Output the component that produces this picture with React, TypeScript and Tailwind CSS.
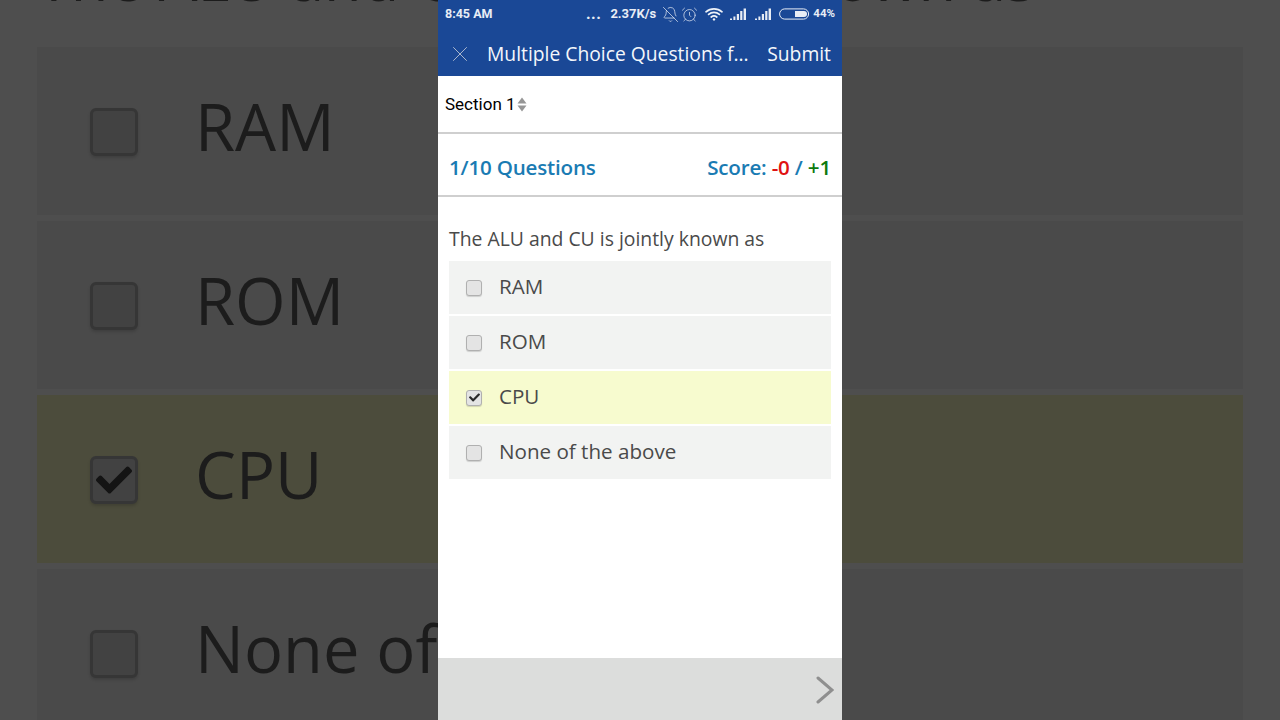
import { AlarmClock, BellOff, X } from 'lucide-react'
import { FaCheck } from 'react-icons/fa'

const options = [
  { label: 'RAM', checked: false },
  { label: 'ROM', checked: false },
  { label: 'CPU', checked: true },
  { label: 'None of the above', checked: false },
]

function Signal() {
  return (
    <svg width="18" height="13" viewBox="0 0 18 13" fill="#e8edf5">
      <rect x="0" y="10.5" width="2" height="1.5" />
      <rect x="3.4" y="8.5" width="2" height="3.5" />
      <rect x="6.8" y="6" width="2.2" height="6" />
      <rect x="10.2" y="3" width="2.2" height="9" />
      <rect x="13.6" y="0.5" width="2.4" height="11.5" />
    </svg>
  )
}

function Wifi() {
  return (
    <svg width="18" height="14" viewBox="0 0 18 14" fill="none" stroke="#eef2f8" strokeWidth="1.7" strokeLinecap="round">
      <path d="M1 4.8C5.6 .8 12.4 .8 17 4.8" />
      <path d="M3.6 7.4C6.7 4.8 11.3 4.8 14.4 7.4" />
      <path d="M6.2 10C7.8 8.7 10.2 8.7 11.8 10" />
      <circle cx="9" cy="12.4" r="1.2" fill="#eef2f8" stroke="none" />
    </svg>
  )
}

function Battery() {
  return (
    <svg width="31" height="12" viewBox="0 0 31 12" fill="none">
      <rect x="0.6" y="0.9" width="29" height="10.2" rx="5.1" stroke="#e8edf5" strokeWidth="1" />
      <path d="M16 3h9a3 3 0 0 1 0 6h-9z" fill="#e8edf5" />
    </svg>
  )
}

function SortArrows() {
  return (
    <svg width="10" height="15" viewBox="0 0 10 15" fill="#969696">
      <path d="M5 0.5L9.5 6.5H0.5z" />
      <path d="M5 14.5L0.5 8.5h9z" />
    </svg>
  )
}

function NextArrow() {
  return (
    <svg width="18" height="28" viewBox="0 0 18 28" fill="none" stroke="#8f8f8f" strokeWidth="3" strokeLinecap="round" strokeLinejoin="miter">
      <path d="M2 2L16 14L2 26" />
    </svg>
  )
}

function Backdrop() {
  return (
    <div className="absolute inset-0 overflow-hidden bg-[#4e4e4e] blur-[0.6px]">
      <div className="-mt-[54px] h-[101px] px-[37px] text-[61.3px] leading-[62px] whitespace-nowrap text-[#1c1c1c]">
        The ALU and CU is jointly known as
      </div>
      <div className="flex flex-col gap-[6px] px-[37px]">
        {options.map(o => (
          <div key={o.label} className={`flex h-[168px] items-center gap-[58px] pl-[53px] ${o.checked ? 'bg-[#4c4c3c]' : 'bg-[#4a4a4a]'}`}>
            <div className="mt-[2px] flex h-[48px] w-[48px] items-center justify-center rounded-[6px] border-[3px] border-[#363636] bg-[#424242] shadow-[0_2px_3px_rgba(0,0,0,0.15)]">
              {o.checked && <FaCheck size={36} className="text-[#141414]" />}
            </div>
            <span className="-mt-[10px] -ml-[1px] text-[65px] leading-none whitespace-nowrap text-[#1c1c1c]">{o.label}</span>
          </div>
        ))}
      </div>
    </div>
  )
}

export default function App() {
  return (
    <div className="relative h-[720px] w-[1280px] overflow-hidden font-['Open_Sans',sans-serif]">
      <Backdrop />
      <div className="relative mx-auto flex h-[720px] w-[404px] flex-col bg-white">
        <div className="bg-[#1a4896] text-white">
          <div className="flex h-[28px] items-center justify-between pl-[7px] pr-[7px] font-['Roboto',sans-serif] text-[12.5px] font-bold text-[#e8edf5]">
            <span>8:45 AM</span>
            <div className="flex items-center">
              <span className="-mt-[1px] mr-[9px] text-[16px] leading-none tracking-[0.5px]">...</span>
              <span className="mr-[6px] text-[13px]">2.37K/s</span>
              <BellOff size={17} strokeWidth={1} className="mr-[2px]" />
              <AlarmClock size={17} strokeWidth={1} className="mr-[7px]" />
              <Wifi />
              <div className="ml-[7px] flex gap-[7px]">
                <Signal />
                <Signal />
              </div>
              <div className="ml-[6px]">
                <Battery />
              </div>
              <span className="ml-[3px] text-[11.5px]">44%</span>
            </div>
          </div>
          <div className="flex h-[48px] items-center pl-[9px] pr-[11px] pt-[4px]">
            <X size={26} strokeWidth={0.8} className="text-[#c0c8d6]" />
            <span className="ml-[14px] flex-1 text-[19.3px] whitespace-nowrap text-[#f4f7fb]">Multiple Choice Questions f...</span>
            <span className="text-[19.3px] text-[#f4f7fb]">Submit</span>
          </div>
        </div>

        <div className="flex h-[58px] items-center gap-[1px] border-b-2 border-[#cfcfcf] pl-[7px] pt-[1px] font-['Roboto',sans-serif] text-[17px] text-black">
          <span>Section 1</span>
          <SortArrows />
        </div>

        <div className="flex h-[63px] items-center justify-between border-b-2 border-[#cfcfcf] px-[11px] pt-[5px] text-[20.6px] font-semibold tracking-[-0.2px] text-[#1a7bb3]">
          <span>1/10 Questions</span>
          <span>
            Score: <span className="text-[#e01212]">-0</span> / <span className="text-[#0d7a0d]">+1</span>
          </span>
        </div>

        <div className="flex-1 px-[11px] pt-[29px]">
          <p className="text-[19.36px] leading-[25px] text-[#4a4a4a]">The ALU and CU is jointly known as</p>
          <div className="mt-[10px] flex flex-col gap-[2px]">
            {options.map(o => (
              <div key={o.label} className={`flex h-[53px] items-center gap-[17px] pl-[17px] ${o.checked ? 'bg-[#f7fbcf]' : 'bg-[#f2f3f2]'}`}>
                <div className="flex h-[16px] w-[16px] items-center justify-center rounded-[3px] border border-[#b0b0b0] bg-[#e4e4e4] shadow-[0_1px_1px_rgba(0,0,0,0.15)]">
                  {o.checked && <FaCheck size={11} className="text-[#2b2b2b]" />}
                </div>
                <span className="-mt-[3px] text-[20.6px] leading-none text-[#4a4a4a]">{o.label}</span>
              </div>
            ))}
          </div>
        </div>

        <div className="flex h-[62px] items-center justify-end bg-[#dcdddc] pr-[8px] pt-[2px]">
          <NextArrow />
        </div>
      </div>
    </div>
  )
}
